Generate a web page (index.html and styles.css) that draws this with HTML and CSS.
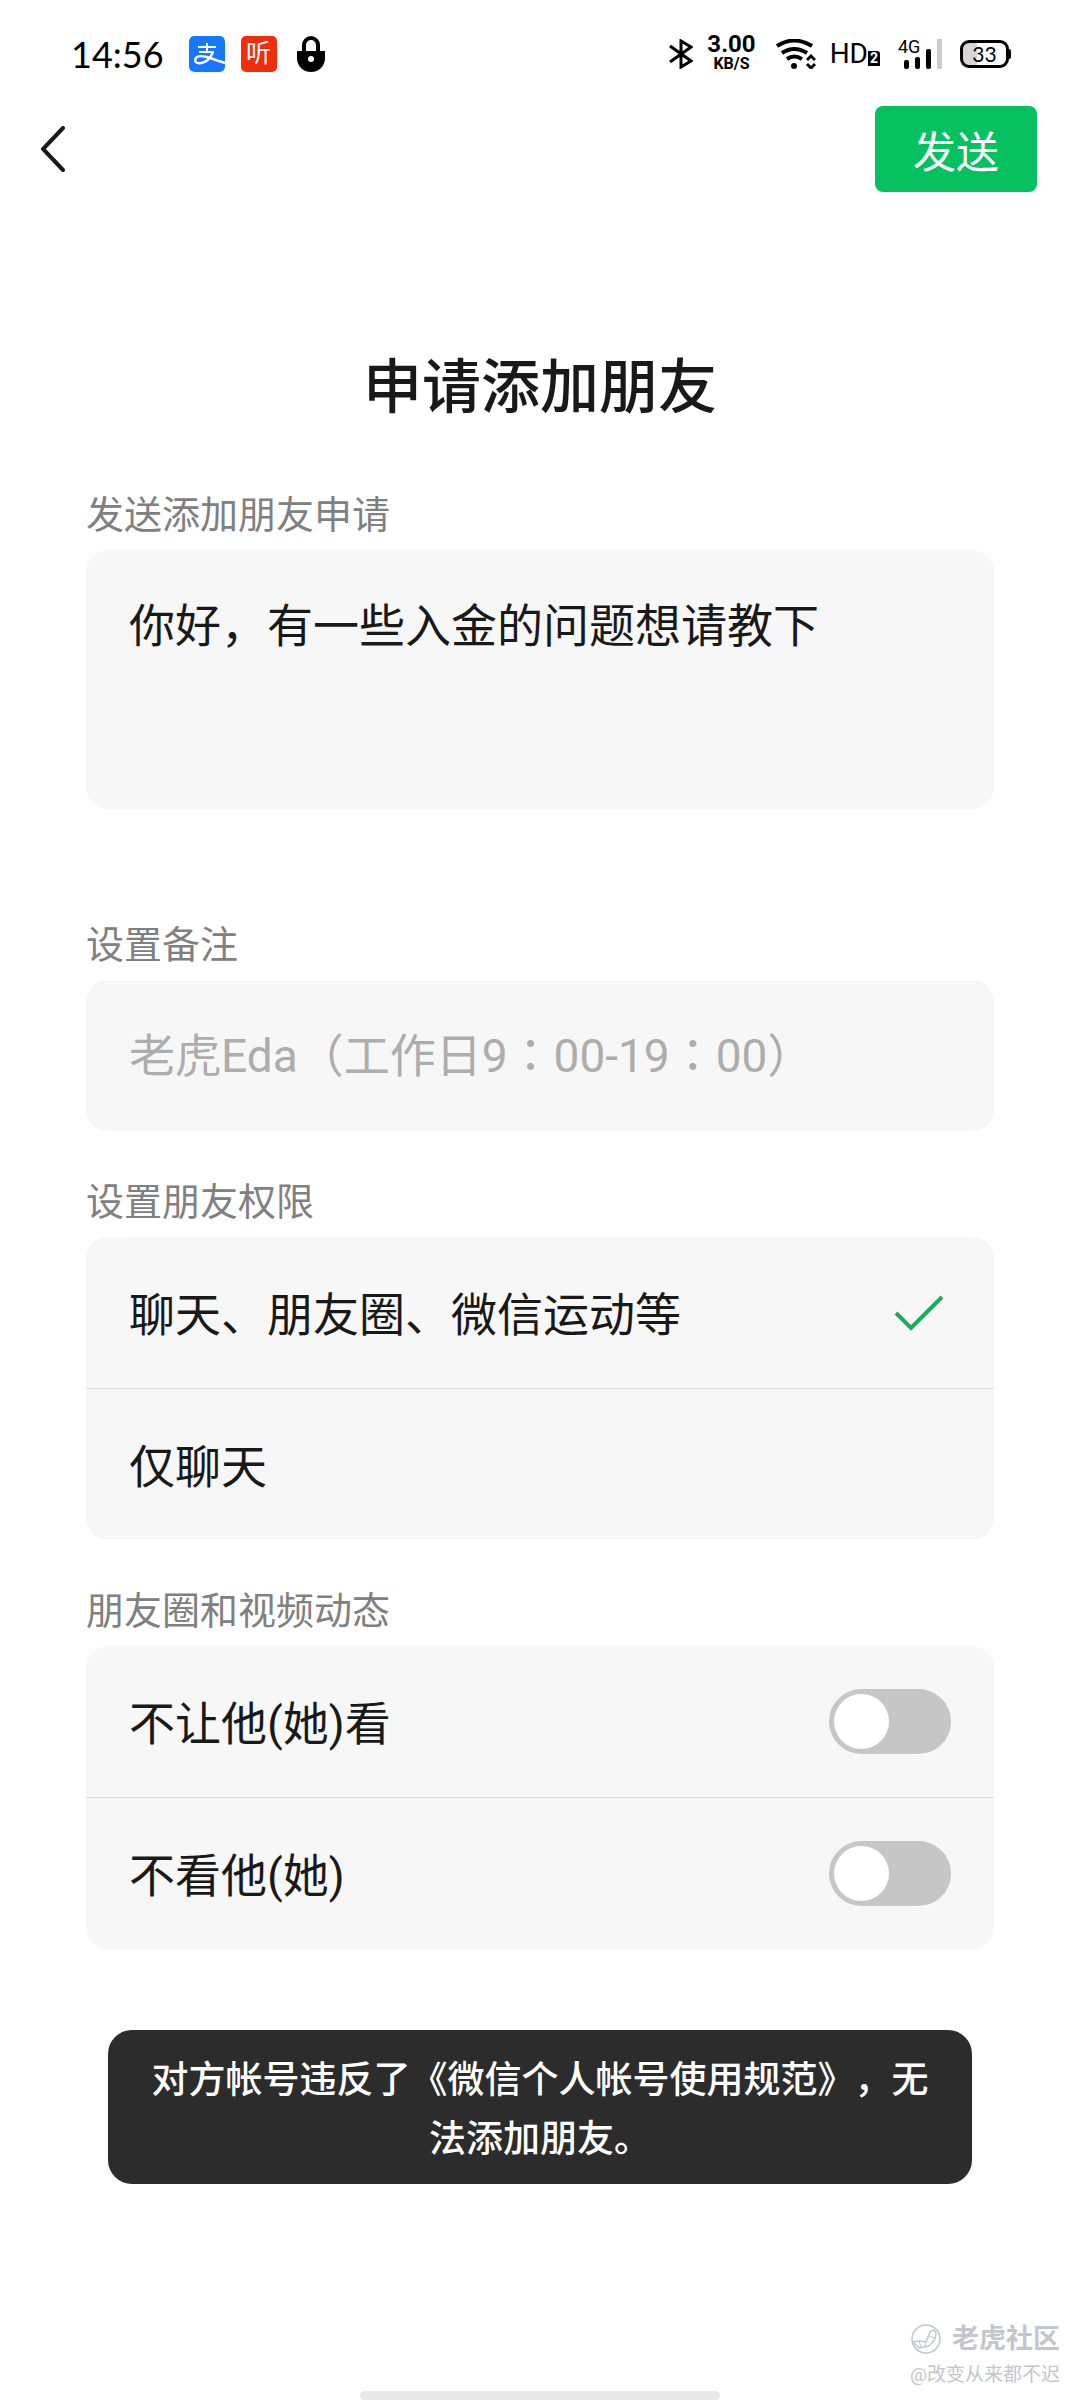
FILE: index.html
```html
<!DOCTYPE html>
<html lang="zh-CN">
<head>
    <meta charset="UTF-8">
    <meta name="viewport" content="width=device-width, initial-scale=1.0">
    <title>申请添加朋友</title>
    <link rel="stylesheet" href="styles.css">
</head>
<body>

<div class="status-bar">
    <div class="status-left">
        <span class="clock">14:56</span>
        <svg class="app-icon" viewBox="0 0 36 36">
            <rect width="36" height="36" rx="5" fill="#1677ff"/>
            <g fill="none" stroke="#fff" stroke-width="2">
                <path d="M9 11H27M18 7V16M10 16H25"/>
                <path d="M24 16C22 21 18 26 12 27C7 28 5 25 7 22C9 19 14 20 18 21L36 27" stroke-width="2.4"/>
            </g>
        </svg>
        <span class="app-icon app-icon-red">听</span>
        <svg class="lock-icon" viewBox="0 0 28 36">
            <path d="M7 17V9a7 7 0 0 1 14 0V17" fill="none" stroke="#000" stroke-width="4"/>
            <path d="M0 15H28V22C28 30 22 36 14 36S0 30 0 22Z"/>
            <circle cx="14" cy="23" r="3" fill="#fff"/>
        </svg>
    </div>
    <div class="status-right">
        <svg class="bluetooth-icon" viewBox="0 0 24 30">
            <path d="M1 7L22 22L12 28V2L22 8L1 23" fill="none" stroke="#000" stroke-width="3"/>
        </svg>
        <div class="net-speed">
            <span class="speed-value">3.00</span>
            <span class="speed-unit">KB/S</span>
        </div>
        <svg class="wifi-icon" viewBox="0 0 40 30">
            <g fill="none" stroke="#000" stroke-width="4">
                <path d="M1 7Q18 -4 36 7"/>
                <path d="M6 14Q18 6 31 14"/>
                <path d="M11 20Q18 15 26 20"/>
            </g>
            <circle cx="18" cy="27" r="3"/>
            <path d="M31 21L35 17L39 21M31 25L35 29L39 25" fill="none" stroke="#000" stroke-width="3"/>
        </svg>
        <div class="hd">HD<span class="hd-badge">2</span></div>
        <div class="signal">
            <span class="signal-type">4G</span>
            <svg viewBox="0 0 44 30">
                <rect x="6" y="21" width="5" height="9" rx="2"/>
                <rect x="17" y="18" width="5" height="12" rx="2"/>
                <rect x="28" y="10" width="5" height="20" rx="2"/>
                <rect x="39" y="0" width="5" height="30" rx="1" fill="#ccc"/>
            </svg>
        </div>
        <div class="battery">33</div>
    </div>
</div>

<header class="nav-bar">
    <button class="back-button" type="button" aria-label="返回">
        <svg viewBox="0 0 24 46">
            <path d="M22 2L2 23L22 44" fill="none" stroke="#191919" stroke-width="4" stroke-linecap="round"/>
        </svg>
    </button>
    <button class="send-button" type="submit" form="requestForm">发送</button>
</header>

<form class="container" id="requestForm">
    <h1>申请添加朋友</h1>

    <label class="label" for="greeting">发送添加朋友申请</label>
    <textarea class="card greeting" id="greeting">你好，有一些入金的问题想请教下</textarea>

    <label class="label" for="remark">设置备注</label>
    <input class="card remark" id="remark" type="text" lang="zh-TW" placeholder="老虎Eda（工作日9：00-19：00）">

    <div class="label" id="permissionLabel">设置朋友权限</div>
    <div class="card" role="radiogroup" aria-labelledby="permissionLabel">
        <label class="row">
            <span>聊天、朋友圈、微信运动等</span>
            <input type="radio" name="permission" checked>
            <svg class="check-icon" viewBox="0 0 50 36">
                <path d="M2 18L17 33L48 2" fill="none" stroke="#1aad5c" stroke-width="4"/>
            </svg>
        </label>
        <label class="row">
            <span>仅聊天</span>
            <input type="radio" name="permission">
            <svg class="check-icon" viewBox="0 0 50 36">
                <path d="M2 18L17 33L48 2" fill="none" stroke="#1aad5c" stroke-width="4"/>
            </svg>
        </label>
    </div>

    <div class="label" id="momentsLabel">朋友圈和视频动态</div>
    <div class="card" role="group" aria-labelledby="momentsLabel">
        <label class="row">
            <span>不让他(她)看</span>
            <input class="switch" type="checkbox">
        </label>
        <label class="row">
            <span>不看他(她)</span>
            <input class="switch" type="checkbox">
        </label>
    </div>
</form>

<div class="toast" role="alert">对方帐号违反了《微信个人帐号使用规范》，无法添加朋友。</div>

<footer>
    <div class="watermark">
        <div class="watermark-brand">
            <svg viewBox="0 0 32 32">
                <circle cx="16" cy="16" r="14" fill="none" stroke="#c3c6cc" stroke-width="1.5"/>
                <path d="M3 19L9 18L16 19L20 9Q24 5 26 10Q26 17 19 23L9 25Z" fill="none" stroke="#c3c6cc" stroke-width="1.5"/>
                <path d="M9 18L11 24M16 19L15 24M19 13L25 15" stroke="#c3c6cc" stroke-width="1"/>
            </svg>
            <span>老虎社区</span>
        </div>
        <div class="watermark-user">@改变从来都不迟</div>
    </div>
    <div class="home-indicator"></div>
</footer>

</body>
</html>
```
FILE: styles.css
```css
* {
    box-sizing: border-box;
}

body {
    margin: 0;
    min-height: 100vh;
    display: flex;
    flex-direction: column;
    background-color: #fff;
    color: #191919;
    font-family: Roboto, "Noto Sans CJK SC", sans-serif;
    text-spacing-trim: space-all;
}

svg {
    display: block;
    flex: none;
}

button,
input,
textarea {
    font-family: inherit;
    color: inherit;
}

/* Status bar */
.status-bar {
    display: flex;
    justify-content: space-between;
    align-items: center;
    height: 106px;
    padding: 2px 71px 0 71px;
    color: #000;
}

.status-left,
.status-right {
    display: flex;
    align-items: center;
}

.clock {
    margin-right: 25px;
    font-family: Lato, sans-serif;
    font-size: 36px;
    line-height: 40px;
}

.app-icon {
    width: 36px;
    height: 36px;
    margin-right: 16px;
    border-radius: 5px;
}

.app-icon-red {
    background-color: #f02d0c;
    color: #fff;
    font-size: 25px;
    line-height: 36px;
    text-align: center;
}

.lock-icon {
    width: 28px;
    height: 36px;
    margin-left: 4px;
}

.bluetooth-icon {
    width: 24px;
    height: 30px;
    margin-right: 14px;
}

.net-speed {
    display: flex;
    flex-direction: column;
    align-items: center;
    margin-right: 20px;
    font-weight: 700;
}

.speed-value {
    font-size: 24px;
    line-height: 20px;
}

.speed-unit {
    font-size: 16px;
    line-height: 20px;
}

.wifi-icon {
    width: 40px;
    height: 30px;
    margin-right: 14px;
}

.hd {
    display: flex;
    align-items: flex-end;
    margin-right: 18px;
    font-size: 28px;
    line-height: 32px;
}

.hd-badge {
    width: 12px;
    margin-bottom: 4px;
    border-radius: 0 3px 0 0;
    background-color: #000;
    color: #fff;
    font-size: 14px;
    font-weight: 700;
    line-height: 15px;
    text-align: center;
}

.signal {
    position: relative;
    margin-right: 18px;
}

.signal svg {
    width: 44px;
    height: 30px;
}

.signal-type {
    position: absolute;
    top: 0;
    left: 0;
    font-size: 18px;
    line-height: 16px;
}

.battery {
    position: relative;
    width: 49px;
    height: 28px;
    border: 3px solid #000;
    border-radius: 9px;
    background: linear-gradient(to right, #d6d6d6 33%, #fff 33%);
    font-family: Lato, sans-serif;
    font-size: 21px;
    line-height: 22px;
    text-align: center;
}

.battery::after {
    content: "";
    position: absolute;
    top: 6px;
    right: -5px;
    width: 3px;
    height: 10px;
    border-radius: 0 2px 2px 0;
    background-color: #000;
}

/* Navigation bar */
.nav-bar {
    display: flex;
    justify-content: space-between;
    align-items: center;
    padding: 0 43px 0 41px;
}

.back-button {
    padding: 0;
    border: none;
    background: none;
    cursor: pointer;
}

.back-button svg {
    width: 24px;
    height: 46px;
}

.send-button {
    width: 162px;
    height: 86px;
    padding: 0;
    border: none;
    border-radius: 8px;
    background-color: #07c160;
    color: #fff;
    font-size: 43px;
    cursor: pointer;
}

/* Form */
.container {
    display: flex;
    flex-direction: column;
    padding: 0 86px;
}

h1 {
    margin: 156px 0 62px;
    font-size: 59px;
    font-weight: 500;
    line-height: 80px;
    text-align: center;
}

.label {
    padding-bottom: 10px;
    color: #808080;
    font-size: 38px;
    line-height: 50px;
}

.card {
    margin: 0 0 46px;
    border: none;
    border-radius: 22px;
    background-color: #f7f7f7;
    font-size: 46px;
    overflow: hidden;
}

.greeting {
    height: 259px;
    margin-bottom: 111px;
    padding: 43px;
    line-height: 66px;
    resize: none;
}

.remark {
    height: 151px;
    padding: 0 43px;
    font-family: Roboto, "Noto Sans CJK TC", sans-serif;
}

.remark::placeholder {
    color: #adadad;
    opacity: 1;
}

.row {
    display: flex;
    justify-content: space-between;
    align-items: center;
    height: 151px;
    padding: 0 43px;
    line-height: 60px;
}

.row span {
    padding-top: 4px;
}

.row + .row {
    height: 152px;
    border-top: 1px solid #dcdcdc;
}

.row input[type="radio"] {
    appearance: none;
    width: 0;
    height: 0;
    margin: 0 0 0 auto;
}

.check-icon {
    width: 50px;
    height: 36px;
    margin-right: 7px;
    visibility: hidden;
}

input:checked + .check-icon {
    visibility: visible;
}

.switch {
    appearance: none;
    width: 122px;
    height: 65px;
    margin: 0;
    padding: 5px;
    border-radius: 33px;
    background-color: #c6c6c6;
    cursor: pointer;
}

.switch::before {
    content: "";
    display: block;
    width: 55px;
    height: 55px;
    border-radius: 50%;
    background-color: #fff;
}

.switch:checked {
    background-color: #07c160;
}

.switch:checked::before {
    margin-left: auto;
}

/* Toast */
.toast {
    margin: 35px 108px 0;
    padding: 21px 43px 15px;
    border-radius: 24px;
    background-color: #2c2c2c;
    color: #fff;
    font-size: 37px;
    font-weight: 500;
    line-height: 59px;
    text-align: center;
}

/* Footer */
footer {
    margin-top: auto;
}

.watermark {
    width: fit-content;
    margin-left: auto;
    padding-right: 20px;
    color: #c3c6cc;
}

.watermark-brand {
    display: flex;
    justify-content: space-between;
    align-items: center;
    font-size: 27px;
    font-weight: 700;
    line-height: 40px;
}

.watermark-brand svg {
    width: 32px;
    height: 32px;
}

.watermark-user {
    font-size: 19px;
    line-height: 32px;
}

.home-indicator {
    width: 360px;
    height: 9px;
    border-radius: 5px;
    margin: 0 auto;
    background-color: #e8e8e8;
}
```
